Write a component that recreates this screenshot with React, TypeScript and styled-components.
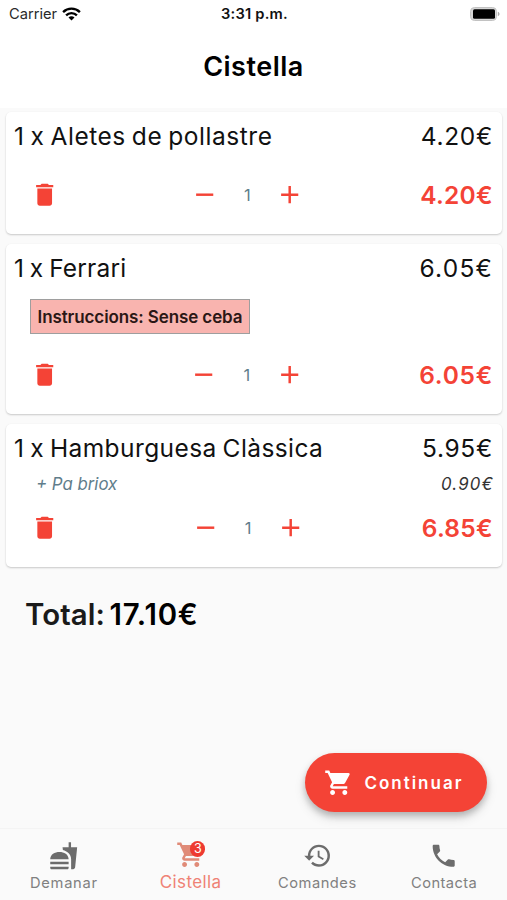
import React from "react";
import styled, { createGlobalStyle } from "styled-components";
import {
  MdAdd,
  MdDelete,
  MdFastfood,
  MdPhone,
  MdRemove,
  MdRestore,
  MdShoppingCart,
} from "react-icons/md";

const RED = "#f44336";

const GlobalStyle = createGlobalStyle`
  * { box-sizing: border-box; }
  body {
    margin: 0;
    background: #fafafa;
    color: #111;
    font-family: Inter, sans-serif;
  }
`;

const Screen = styled.div`
  position: relative;
  display: flex;
  flex-direction: column;
  width: 507px;
  height: 900px;
  overflow: hidden;
  background: #fafafa;
`;

const Header = styled.header`
  height: 108px;
  background: #fff;
`;

const StatusBar = styled.div`
  display: grid;
  grid-template-columns: 1fr auto 1fr;
  align-items: center;
  height: 27px;
  padding: 0 7px 0 9px;
  font-size: 14.7px;
`;

const Carrier = styled.div`
  display: flex;
  align-items: center;
  gap: 5px;
  color: #2a2a2a;
`;

const Clock = styled.div`
  font-weight: 600;
  letter-spacing: 0.2px;
`;

const BatteryIcon = styled.svg`
  justify-self: end;
`;

const PageTitle = styled.h1`
  margin: 0;
  text-align: center;
  font-size: 27px;
  font-weight: 600;
  line-height: 80px;
  letter-spacing: 0.5px;
  color: #000;
`;

const CartList = styled.main`
  display: flex;
  flex-direction: column;
  gap: 10px;
  padding: 4px 5px 0 6px;
`;

const Card = styled.section`
  padding-top: 6px;
  border-radius: 5px;
  background: #fff;
  box-shadow: 0 1px 2px rgba(0, 0, 0, 0.2), 0 0 2px rgba(0, 0, 0, 0.02);
`;

const CardTitle = styled.div<{ $tracking: number }>`
  display: flex;
  justify-content: space-between;
  height: 38px;
  padding: 0 9px 0 8px;
  font-size: 24.5px;
  line-height: 37px;
  letter-spacing: ${(p) => p.$tracking}px;
  word-spacing: -1.4px;
`;

const Price = styled.span<{ $tracking: number }>`
  letter-spacing: ${(p) => p.$tracking}px;
`;

const Instructions = styled.div`
  width: 220px;
  height: 35px;
  margin: 11px 0 2px 24px;
  border: 1px solid #9e9e9e;
  background: #f9b4af;
  color: #2b1715;
  text-align: center;
  font-size: 17px;
  font-weight: 600;
  line-height: 35px;
  letter-spacing: -0.1px;
  white-space: nowrap;
`;

const Extra = styled.div`
  display: flex;
  justify-content: space-between;
  height: 16px;
  margin-top: 5px;
  padding: 0 8px 0 30px;
  color: #607d8b;
  font-size: 16.8px;
  font-style: italic;
  line-height: 22px;
`;

const ExtraPrice = styled.span`
  color: #333;
  letter-spacing: 1.2px;
`;

const Controls = styled.div`
  display: flex;
  align-items: center;
  justify-content: space-between;
  height: 78px;
  padding: 0 9px 0 24px;
  color: ${RED};
`;

const IconButton = styled.button`
  display: flex;
  padding: 0;
  border: 0;
  background: none;
  color: inherit;
  font-size: 29.4px;
`;

const RemoveItem = styled(IconButton)`
  margin-right: 15px;
`;

const Stepper = styled.div`
  display: flex;
  align-items: center;
  justify-content: space-between;
  width: 115px;
`;

const Quantity = styled.span`
  padding-top: 1px;
  color: #607d8b;
  font-size: 16.5px;
`;

const LineTotal = styled.span<{ $tracking: number }>`
  font-size: 24.5px;
  font-weight: 600;
  letter-spacing: ${(p) => p.$tracking}px;
`;

const Total = styled.div`
  padding: 25px 0 0 25px;
  font-size: 29.4px;
  font-weight: 600;
  line-height: 45px;
  letter-spacing: 0.1px;
  word-spacing: -3px;
  color: #1a1a1a;
`;

const Amount = styled.span`
  color: #000;
  letter-spacing: 0.8px;
`;

const ContinueButton = styled.button`
  position: absolute;
  right: 20px;
  bottom: 88px;
  display: flex;
  align-items: center;
  gap: 11px;
  width: 182px;
  height: 59px;
  padding: 0 0 0 19px;
  border: 0;
  border-radius: 30px;
  background: ${RED};
  color: #fff;
  box-shadow: 0 4px 6px rgba(0, 0, 0, 0.2), 0 6px 12px rgba(0, 0, 0, 0.12);
  font-family: inherit;
  font-size: 17px;
  font-weight: 600;
  letter-spacing: 2px;
`;

const NavBar = styled.nav`
  display: grid;
  grid-template-columns: repeat(4, 1fr);
  height: 72px;
  margin-top: auto;
  border-top: 1px solid #f4f4f4;
  background: #fafafa;
`;

const NavItem = styled.a<{ $active?: boolean; $tracking: number }>`
  display: flex;
  flex-direction: column;
  align-items: center;
  padding: ${(p) => (p.$active ? 11 : 12)}px 0 0 1px;
  color: ${(p) => (p.$active ? "#ef8275" : "#808080")};
  font-size: ${(p) => (p.$active ? 17 : 14.7)}px;
  line-height: 26px;
  letter-spacing: ${(p) => p.$tracking}px;
`;

const NavIcon = styled.span<{ $active?: boolean }>`
  position: relative;
  display: flex;
  color: ${(p) => (p.$active ? "#e08b78" : "#6c6c6c")};
  font-size: 29.4px;
`;

const Badge = styled.span`
  position: absolute;
  top: 1px;
  right: 0;
  width: 15px;
  height: 16px;
  border-radius: 8px;
  background: #ee3a30;
  color: #fff;
  text-align: center;
  font-size: 12.5px;
  line-height: 16px;
  letter-spacing: 0;
`;

interface Item {
  name: string;
  price: string;
  total: string;
  nameTracking: number;
  priceTracking: number;
  totalTracking: number;
  instructions?: string;
  extra?: { name: string; price: string };
}

const items: Item[] = [
  { name: "Aletes de pollastre", price: "4.20€", total: "4.20€", nameTracking: 0.54, priceTracking: 0.7, totalTracking: 0.3 },
  {
    name: "Ferrari", price: "6.05€", total: "6.05€", nameTracking: 0.2, priceTracking: 1.2, totalTracking: 0.7,
    instructions: "Instruccions: Sense ceba",
  },
  {
    name: "Hamburguesa Clàssica", price: "5.95€", total: "6.85€", nameTracking: 0.41, priceTracking: 0.7, totalTracking: 0.3,
    extra: { name: "+ Pa briox", price: "0.90€" },
  },
];

function CartItem({ item }: { item: Item }) {
  return (
    <Card>
      <CardTitle $tracking={item.nameTracking}>
        <span>1 x {item.name}</span>
        <Price $tracking={item.priceTracking}>{item.price}</Price>
      </CardTitle>
      {item.instructions && <Instructions>{item.instructions}</Instructions>}
      {item.extra && (
        <Extra>
          <span>{item.extra.name}</span>
          <ExtraPrice>{item.extra.price}</ExtraPrice>
        </Extra>
      )}
      <Controls>
        <RemoveItem><MdDelete /></RemoveItem>
        <Stepper>
          <IconButton><MdRemove /></IconButton>
          <Quantity>1</Quantity>
          <IconButton><MdAdd /></IconButton>
        </Stepper>
        <LineTotal $tracking={item.totalTracking}>{item.total}</LineTotal>
      </Controls>
    </Card>
  );
}

export default function App() {
  return (
    <Screen>
      <GlobalStyle />
      <Header>
        <StatusBar>
          <Carrier>
            Carrier
            <svg width="19" height="14" viewBox="0 0 19 14" fill="none" stroke="#000" strokeWidth="2.4">
              <path d="M1.1 5.1a12 12 0 0 1 16.8 0" />
              <path d="M4.1 8.3a7.7 7.7 0 0 1 10.8 0" />
              <path d="M6.5 10.5a4.2 4.2 0 0 1 6 0l-3 3z" fill="#000" stroke="none" />
            </svg>
          </Carrier>
          <Clock>3:31 p.m.</Clock>
          <BatteryIcon width="30" height="14" viewBox="0 0 30 14">
            <rect x="0.5" y="0.5" width="26" height="13" rx="4" fill="#d6d6d6" stroke="#c2c2c2" />
            <rect x="3" y="2.3" width="22" height="9.4" rx="1.5" fill="#000" />
            <path d="M27.8 4.8c2.3.7 2.3 3.7 0 4.4z" fill="#aaa" />
          </BatteryIcon>
        </StatusBar>
        <PageTitle>Cistella</PageTitle>
      </Header>
      <CartList>
        {items.map((item) => <CartItem key={item.name} item={item} />)}
      </CartList>
      <Total>Total: <Amount>17.10€</Amount></Total>
      <ContinueButton>
        <MdShoppingCart size={29.4} />
        Continuar
      </ContinueButton>
      <NavBar>
        <NavItem $tracking={0.7}>
          <NavIcon><MdFastfood /></NavIcon>
          Demanar
        </NavItem>
        <NavItem $active $tracking={0.4}>
          <NavIcon $active><MdShoppingCart /><Badge>3</Badge></NavIcon>
          Cistella
        </NavItem>
        <NavItem $tracking={0.5}>
          <NavIcon><MdRestore /></NavIcon>
          Comandes
        </NavItem>
        <NavItem $tracking={0.4}>
          <NavIcon><MdPhone /></NavIcon>
          Contacta
        </NavItem>
      </NavBar>
    </Screen>
  );
}
